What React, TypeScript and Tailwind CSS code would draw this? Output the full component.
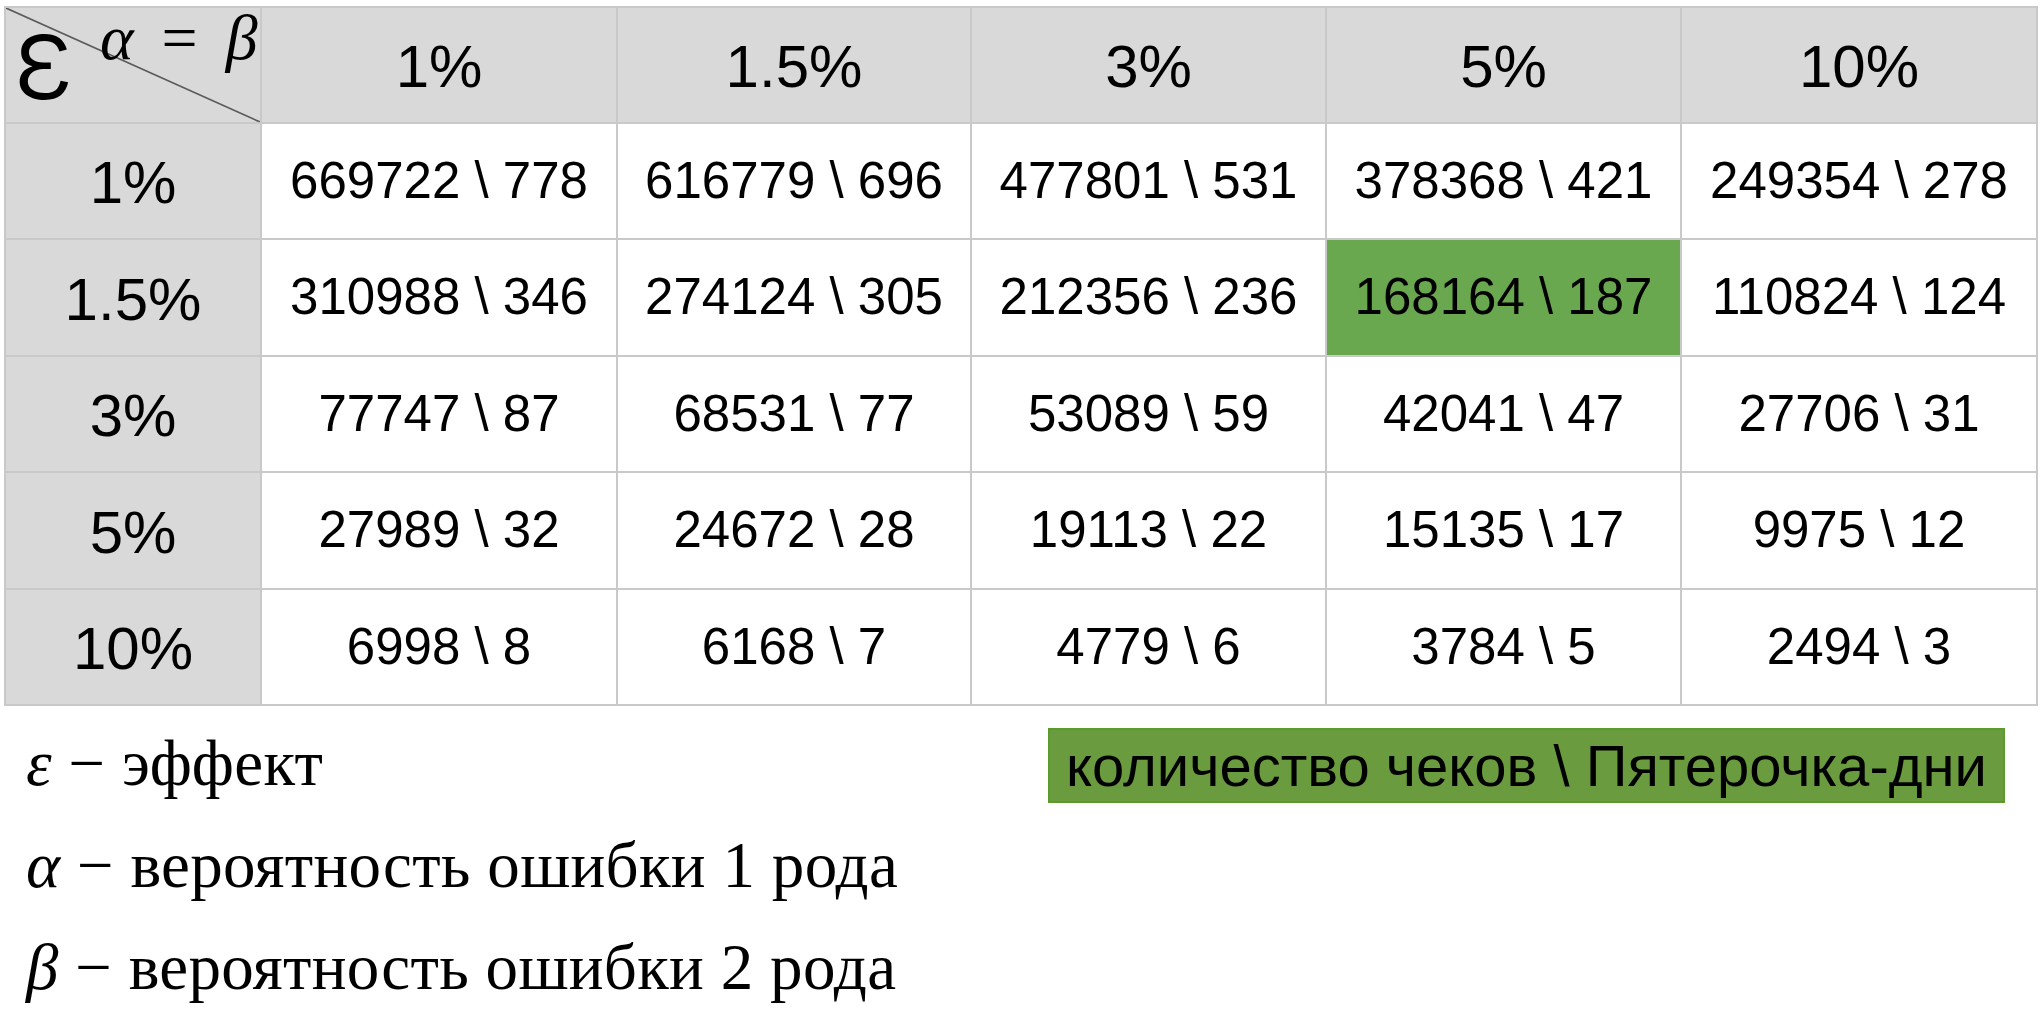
import React from "react";

const cols = ["1%", "1.5%", "3%", "5%", "10%"];
const rows: { label: string; cells: string[] }[] = [
  { label: "1%", cells: ["669722 \\ 778", "616779 \\ 696", "477801 \\ 531", "378368 \\ 421", "249354 \\ 278"] },
  { label: "1.5%", cells: ["310988 \\ 346", "274124 \\ 305", "212356 \\ 236", "168164 \\ 187", "110824 \\ 124"] },
  { label: "3%", cells: ["77747 \\ 87", "68531 \\ 77", "53089 \\ 59", "42041 \\ 47", "27706 \\ 31"] },
  { label: "5%", cells: ["27989 \\ 32", "24672 \\ 28", "19113 \\ 22", "15135 \\ 17", "9975 \\ 12"] },
  { label: "10%", cells: ["6998 \\ 8", "6168 \\ 7", "4779 \\ 6", "3784 \\ 5", "2494 \\ 3"] },
];

export default function App() {
  return (
    <div className="w-[2042px] h-[1036px] bg-white overflow-hidden text-black" style={{ fontFamily: '"Liberation Sans", Arial, sans-serif' }}>
      <div className="pt-[6px] pl-[4px]">
        <div className="grid w-[2034px] grid-cols-[254px_354px_352px_353px_353px_354px] grid-rows-[114px_114px_115px_114px_115px_114px] gap-[2px] border-2 border-[#c9c9c9] bg-[#c9c9c9]">
          <div className="relative bg-[#d9d9d9]">
            <svg className="absolute inset-0 h-full w-full" viewBox="0 0 100 100" preserveAspectRatio="none">
              <line x1="0" y1="0" x2="100" y2="100" stroke="#5a5a5a" strokeWidth="1.6" vectorEffect="non-scaling-stroke" />
            </svg>
            <span className="absolute left-[7px] top-[9px] text-[117px] leading-[80px] font-light" style={{ fontFamily: 'Inter, "Liberation Sans", sans-serif' }}>ε</span>
            <div className="absolute left-[94px] top-[0px] flex items-baseline whitespace-nowrap text-[64px] leading-[60px]" style={{ fontFamily: '"Liberation Serif", serif' }}>
              <span className="italic">α</span>
              <span className="ml-[28px]">=</span>
              <span className="ml-[28px] italic">β</span>
            </div>
          </div>
          {cols.map((c) => (
            <div key={c} className="flex items-center justify-center bg-[#d9d9d9] text-[60px] pt-[4px]">{c}</div>
          ))}
          {rows.map((r) => (
            <React.Fragment key={r.label}>
              <div className="flex items-center justify-center bg-[#d9d9d9] text-[60px] pt-[4px]">{r.label}</div>
              {r.cells.map((v) => (
                <div key={v} className={`flex items-center justify-center text-[51px] ${v === "168164 \\ 187" ? "bg-[#6aa84f]" : "bg-white"}`}>{v}</div>
              ))}
            </React.Fragment>
          ))}
        </div>
      </div>
      <div className="flex">
        <div className="w-[1048px] pl-[26px] pt-[6px] text-[65px] leading-[102px] tracking-[0.3px]" style={{ fontFamily: '"Liberation Serif", serif' }}>
          <div className="whitespace-nowrap"><span className="italic">ε</span> − эффект</div>
          <div className="whitespace-nowrap"><span className="italic">α</span> − вероятность ошибки 1 рода</div>
          <div className="whitespace-nowrap"><span className="italic">β</span> − вероятность ошибки 2 рода</div>
        </div>
        <div className="mt-[22px] flex h-[75px] w-[957px] items-center justify-center border-2 border-[#5b9a2c] bg-[#6a9b3e] text-[58px] whitespace-nowrap">
          количество чеков \ Пятерочка-дни
        </div>
      </div>
    </div>
  );
}
